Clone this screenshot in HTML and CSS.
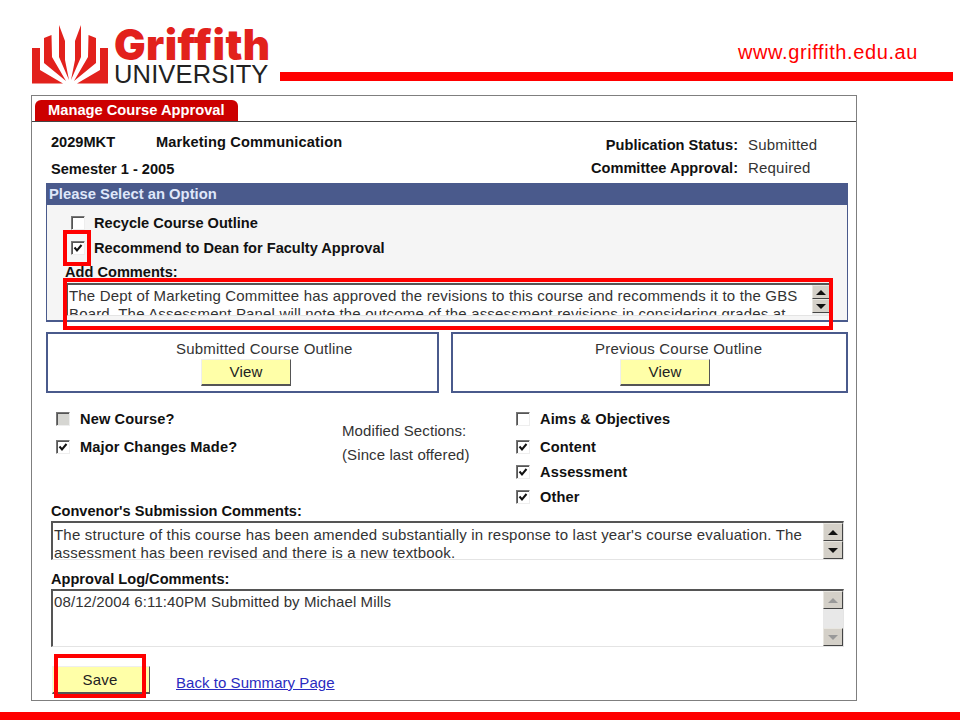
FILE: index.html
```html
<!DOCTYPE html>
<html lang="en">
<head>
<meta charset="utf-8">
<title>Manage Course Approval</title>
<link rel="stylesheet" href="styles.css">
</head>
<body>
<div class="slide">
  <header class="top">
    <div class="logo">
      <svg class="crest" width="76" height="60" viewBox="0 0 76 60">
        <g fill="#e2211c">
          <path d="M0 23H8V45L31 58.500H0Z"/>
          <path d="M12 13L19.500 10L20 32L34 56L12 38Z"/>
          <path d="M27 0L33 16L33 35L37 55L27 32Z"/>
          <path d="M49 0L43 16L43 35L39 55L49 32Z"/>
          <path d="M64 13L56.500 10L56 32L42 56L64 38Z"/>
          <path d="M76 23H68V45L45 58.500H76Z"/>
        </g>
      </svg>
      <div class="wordmark">
        <div class="griffith">Griffith</div>
        <div class="university">UNIVERSITY</div>
      </div>
    </div>
    <div class="top-right">
      <div class="url">www.griffith.edu.au</div>
      <div class="rule"></div>
    </div>
  </header>

  <main class="panel">
    <div class="tab-row"><div class="tab">Manage Course Approval</div></div>

    <div class="meta">
      <div class="course">
        <div class="course-line"><b class="code">2029MKT</b><b class="title">Marketing Communication</b></div>
        <div class="semester"><b>Semester 1 - 2005</b></div>
      </div>
      <div class="status">
        <b>Publication Status:</b><span>Submitted</span>
        <b>Committee Approval:</b><span>Required</span>
      </div>
    </div>

    <section class="options">
      <h2 class="options-title">Please Select an Option</h2>
      <div class="options-body">
        <label class="check-row first"><span class="cb"></span><b>Recycle Course Outline</b></label>
        <label class="check-row second"><span class="cb checked"><svg viewBox="0 0 12 12"><path d="M2.500 5.500L5 8.500L9.500 3" fill="none" stroke="#111" stroke-width="2"/></svg></span><b>Recommend to Dean for Faculty Approval</b></label>
        <div class="add-label"><b>Add Comments:</b></div>
        <div class="textbox tb-add">
          <div class="tb-text">The Dept of Marketing Committee has approved the revisions to this course and recommends it to the GBS<br>Board. The Assessment Panel will note the outcome of the assessment revisions in considering grades at</div>
          <div class="scroll small">
            <span class="sb-btn"><i class="up"></i></span>
            <span class="sb-btn"><i class="down"></i></span>
          </div>
        </div>
      </div>
    </section>

    <div class="outlines">
      <div class="outline outline-a">
        <div>Submitted Course Outline</div>
        <div class="btn view">View</div>
      </div>
      <div class="outline outline-b">
        <div>Previous Course Outline</div>
        <div class="btn view">View</div>
      </div>
    </div>

    <div class="flags">
      <div class="flags-left">
        <label class="check-row"><span class="cb disabled"></span><b>New Course?</b></label>
        <label class="check-row"><span class="cb checked"><svg viewBox="0 0 12 12"><path d="M2.500 5.500L5 8.500L9.500 3" fill="none" stroke="#111" stroke-width="2"/></svg></span><b>Major Changes Made?</b></label>
      </div>
      <div class="flags-mid"><div>Modified Sections:</div><div>(Since last offered)</div></div>
      <div class="flags-right">
        <label class="check-row aims"><span class="cb"></span><b>Aims &amp; Objectives</b></label>
        <label class="check-row"><span class="cb checked"><svg viewBox="0 0 12 12"><path d="M2.500 5.500L5 8.500L9.500 3" fill="none" stroke="#111" stroke-width="2"/></svg></span><b>Content</b></label>
        <label class="check-row"><span class="cb checked"><svg viewBox="0 0 12 12"><path d="M2.500 5.500L5 8.500L9.500 3" fill="none" stroke="#111" stroke-width="2"/></svg></span><b>Assessment</b></label>
        <label class="check-row"><span class="cb checked"><svg viewBox="0 0 12 12"><path d="M2.500 5.500L5 8.500L9.500 3" fill="none" stroke="#111" stroke-width="2"/></svg></span><b>Other</b></label>
      </div>
    </div>

    <div class="field-label conv"><b>Convenor's Submission Comments:</b></div>
    <div class="textbox tb-conv">
      <div class="tb-text">The structure of this course has been amended substantially in response to last year's course evaluation. The<br>assessment has been revised and there is a new textbook.</div>
      <div class="scroll">
        <span class="sb-btn"><i class="up"></i></span>
        <span class="sb-btn"><i class="down"></i></span>
      </div>
    </div>

    <div class="field-label log"><b>Approval Log/Comments:</b></div>
    <div class="textbox tb-log">
      <div class="tb-text">08/12/2004 6:11:40PM Submitted by Michael Mills</div>
      <div class="scroll off">
        <span class="sb-btn"><i class="up"></i></span>
        <span class="sb-track"></span>
        <span class="sb-btn"><i class="down"></i></span>
      </div>
    </div>

    <div class="actions">
      <div class="btn save">Save</div>
      <a class="back" href="#">Back to Summary Page</a>
    </div>
  </main>

  <footer class="bottom"></footer>

  <div class="mark m-check"></div>
  <div class="mark m-text"></div>
  <div class="mark m-save"></div>
</div>
</body>
</html>
```
FILE: styles.css
```css
* { box-sizing: border-box; }
html, body { margin: 0; padding: 0; }
body { width: 960px; height: 720px; overflow: hidden; background: #fff; font-family: "Liberation Sans", Arial, sans-serif; color: #222; }
b { font-weight: 700; color: #111; font-size: 14.6px; letter-spacing: 0; }
.slide { position: relative; width: 960px; height: 720px; display: flex; flex-direction: column; }

.top { display: flex; height: 95px; padding: 25px 7px 0 32px; }
.logo { display: flex; width: 248px; height: 60px; }
.crest { flex: none; }
.wordmark { margin-left: 6px; width: 155px; }
.griffith { font: 900 42px/38px Inter, "Liberation Sans", sans-serif; color: #e2211c; letter-spacing: .4px; height: 38px; margin-top: 1px; white-space: nowrap; }
.university { font: 400 25.5px/20px "Liberation Sans", sans-serif; color: #222; letter-spacing: .15px; white-space: nowrap; }
.top-right { flex: 1; display: flex; flex-direction: column; align-items: flex-end; }
.url { font-size: 20px; letter-spacing: .6px; line-height: 22px; color: #f00; margin-top: 16px; margin-right: 35px; }
.rule { align-self: stretch; height: 9px; background: #f00; margin-top: 9px; }

.panel { width: 826px; height: 606px; margin-left: 31px; border: 1px solid #7f7f7f; font-size: 15px; letter-spacing: .2px; padding: 4px 8px 0 3px; }
.tab-row { height: 22px; margin-right: -8px; margin-left: -3px; padding-left: 3px; border-bottom: 1px solid #444; }
.tab { width: 203px; height: 21px; background: #cc0000; border-radius: 6px 6px 0 0; color: #fff; font: 700 14.7px/20px "Liberation Sans", sans-serif; letter-spacing: 0; padding-left: 13px; }

.meta { display: flex; justify-content: space-between; height: 61px; padding: 10px 30px 0 16px; }
.course-line { display: flex; line-height: 20px; }
.code { width: 105px; }
.title { letter-spacing: .13px; }
.semester { margin-top: 7px; line-height: 20px; }
.status { display: grid; grid-template-columns: auto 70px; column-gap: 10px; grid-auto-rows: 23px; justify-items: end; padding-top: 3px; line-height: 20px; }
.status span { justify-self: start; color: #333; }

.options { margin-left: 11px; width: 802px; height: 139px; border: 1px solid #4a5a8c; border-bottom-width: 2px; background: #f5f5f5; }
.options-title { margin: 0; height: 21px; background: #4a5a8c; color: #dfe7fa; font: 700 14.8px/20px "Liberation Sans", sans-serif; letter-spacing: 0; padding-left: 2px; }
.check-row { display: flex; align-items: center; line-height: 20px; }
.cb { flex: none; width: 14px; height: 14px; margin-right: 9px; border: 1px solid #eee; border-top-color: #777; border-left-color: #777; background: #fff; box-shadow: inset 1px 1px 0 #555; display: block; }
.cb svg { display: block; width: 12px; height: 12px; }
.cb.disabled { background: #d6d6d2; }
.first { padding: 8px 0 0 24px; }
.second { padding: 5px 0 0 24px; }
.add-label { padding-left: 18px; line-height: 18px; margin-top: 5px; }

.textbox { display: flex; border: 1px solid #e4e4e4; border-top: 2px solid #555; border-left: 2px solid #555; background: #fff; overflow: hidden; }
.tb-text { flex: 1; white-space: nowrap; overflow: hidden; color: #333; padding: 0 0 0 1px; }
.tb-add { margin: 2px 16px 0 19px; height: 33px; }
.tb-add .tb-text { line-height: 18px; padding-top: 2px; letter-spacing: .17px; }
.tb-conv { margin: 1px 4px 0 16px; height: 39px; }
.tb-conv .tb-text { line-height: 18px; padding-top: 3px; letter-spacing: .2px; }
.tb-log { margin: 1px 4px 0 16px; height: 58px; }
.tb-log .tb-text { line-height: 22px; letter-spacing: .1px; }
.scroll { width: 20px; flex: none; display: flex; flex-direction: column; background: #eee; }
.scroll.small { width: 18px; }
.sb-btn { height: 18px; flex: none; background: #d4d0c8; border: 1px solid #e8e6e0; border-right-color: #444; border-bottom-color: #444; display: flex; align-items: center; justify-content: center; }
.small .sb-btn { height: 14px; }
.sb-track { flex: 1; background: #e8e8e8; }
.sb-btn i { display: block; width: 0; height: 0; border: 5px solid transparent; }
.sb-btn .up { border-top: 0; border-bottom-color: #111; }
.sb-btn .down { border-bottom: 0; border-top-color: #111; }
.off .sb-btn .up { border-bottom-color: #999; }
.off .sb-btn .down { border-top-color: #999; }

.outlines { display: flex; gap: 12px; margin: 10px 0 0 11px; width: 802px; }
.outline { height: 61px; border: 2px solid #4a5a8c; line-height: 20px; color: #333; padding-top: 5px; white-space: nowrap; }
.outline-a { width: 393px; padding-left: 128px; }
.outline-b { width: 397px; padding-left: 142px; }
.btn { background: #ffffa8; border: 1px solid #eee; border-right-color: #555; border-bottom: 2px solid #555; color: #222; text-align: center; }
.view { width: 90px; height: 27px; line-height: 23px; margin-left: 25px; }

.flags { display: flex; height: 94px; margin-top: 15px; }
.flags b { letter-spacing: .12px; }
.flags .cb { margin-right: 10px; }
.flags-left { width: 307px; padding: 1px 0 0 21px; display: flex; flex-direction: column; gap: 8px; }
.flags-mid { width: 174px; padding-top: 11px; color: #333; line-height: 24px; letter-spacing: .1px; }
.flags-right { display: flex; flex-direction: column; gap: 5px; padding-top: 1px; }
.flags-right .aims { margin-bottom: 3px; }

.field-label { padding-left: 16px; line-height: 18px; }
.log { margin-top: 10px; }

.actions { display: flex; align-items: flex-end; margin: 19px 0 0 17px; }
.save { width: 98px; height: 28px; line-height: 25px; padding-right: 2px; }
.back { color: #2a2ac0; margin-left: 26px; line-height: 20px; margin-bottom: 1px; letter-spacing: .05px; }

.bottom { height: 8px; margin-top: auto; background: #f00; }

.mark { position: absolute; border: 4px solid #f00; }
.m-check { left: 63px; top: 230px; width: 28px; height: 36px; }
.m-text { left: 63px; top: 278px; width: 770px; height: 52px; }
.m-save { left: 54px; top: 654px; width: 92px; height: 44px; }
```
